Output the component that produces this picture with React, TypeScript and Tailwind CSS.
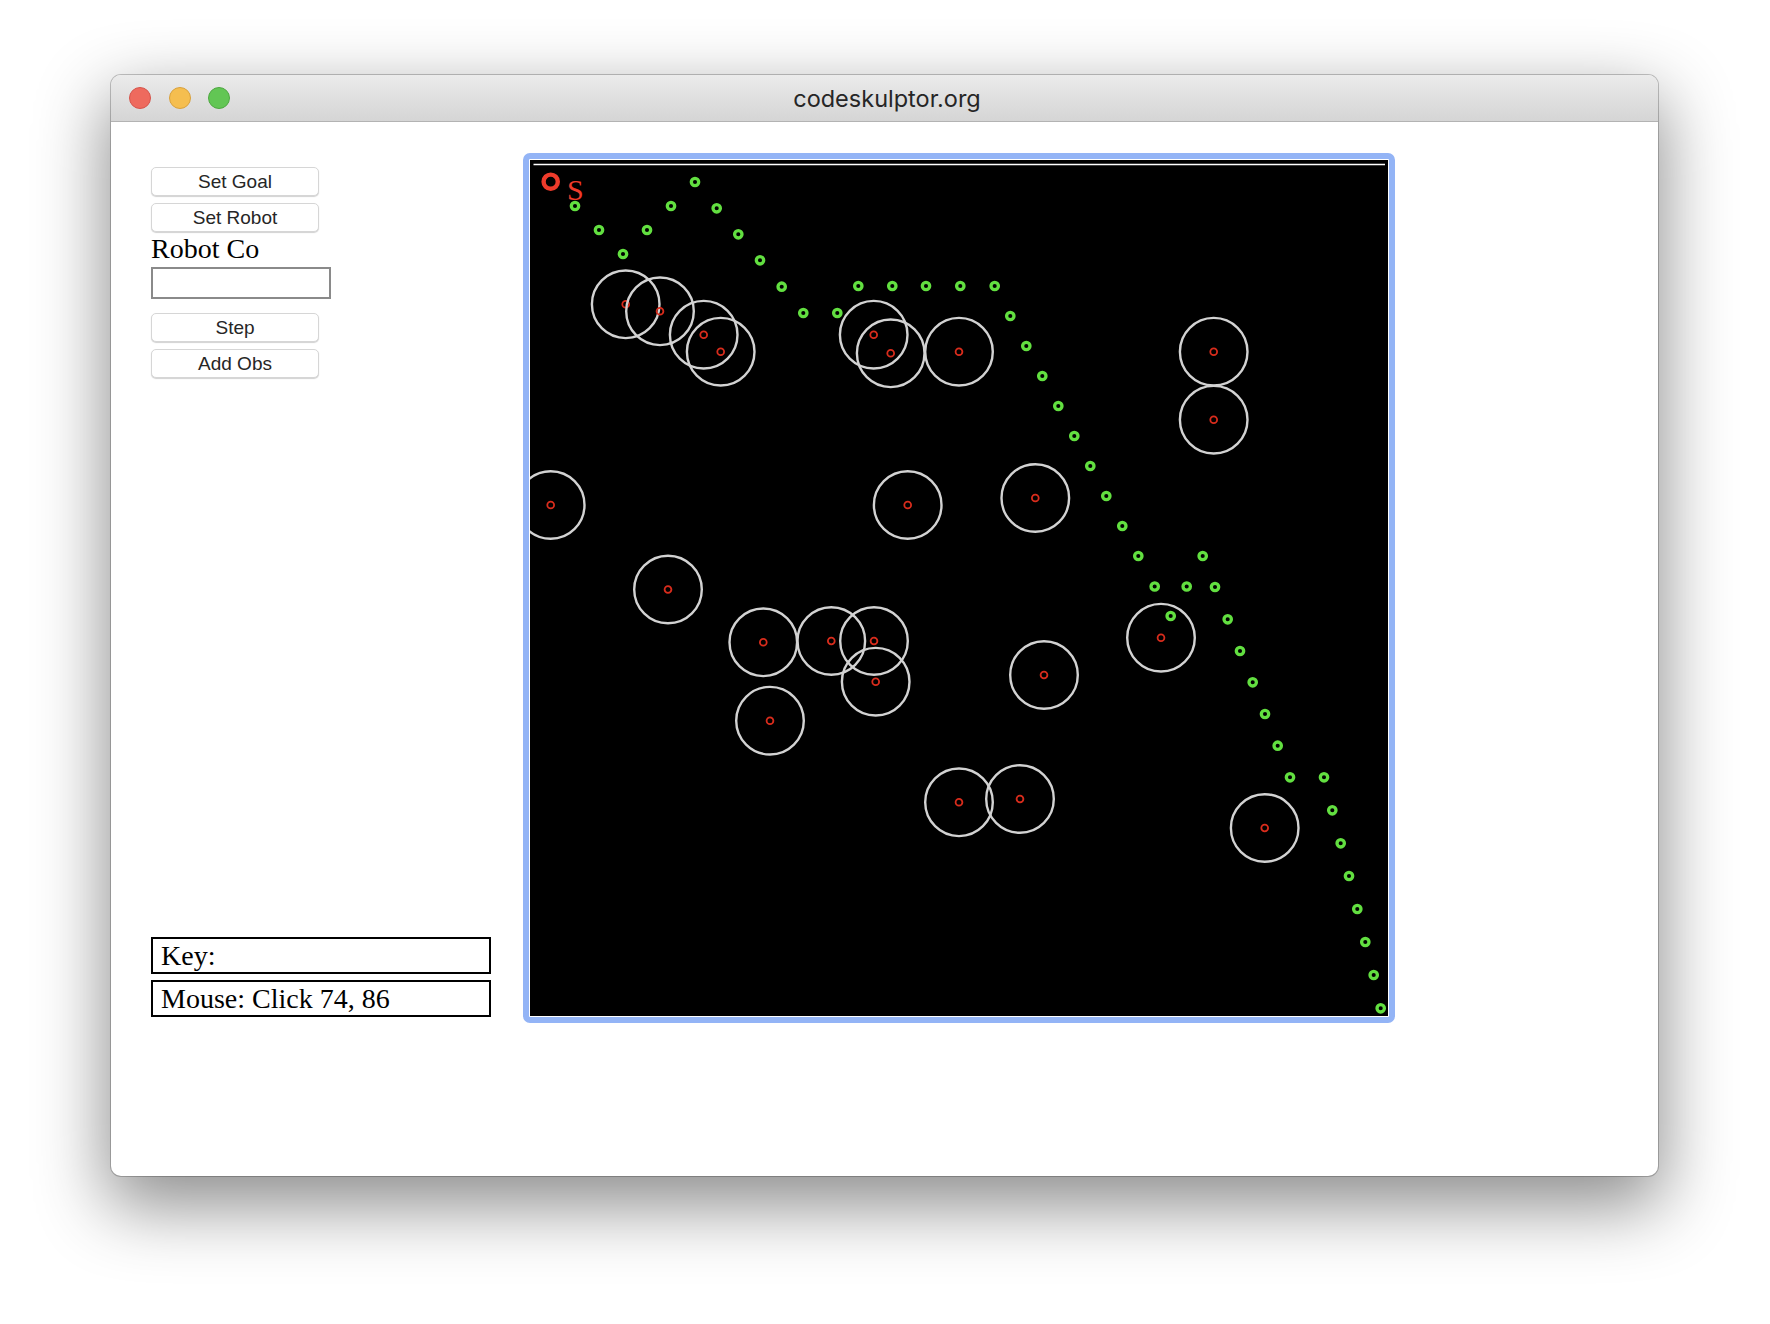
import React from "react";

// canvas drawing is kept in page coordinates (viewBox starts where the canvas starts)
const GOAL = { x: 550.7, y: 181.7 };

const PATH: [number, number][] = [
  [575, 206], [599, 230], [623, 254], [647, 230], [671, 206], [695, 182],
  [716.7, 208.3], [738.3, 234.3], [760, 260.3], [781.7, 286.7], [803.3, 313],
  [837.3, 313], [858.3, 286], [892.3, 286], [926, 286], [960.3, 286],
  [994.7, 286], [1010.3, 316], [1026.3, 346], [1042.3, 376], [1058.3, 406],
  [1074.3, 436], [1090.3, 466], [1106.3, 496], [1122.3, 526], [1138.3, 556],
  [1202.7, 556], [1154.7, 586.5], [1186.7, 586.5], [1215, 587], [1170.7, 616],
  [1227.7, 619.3], [1240, 651], [1252.7, 682.3], [1265, 714], [1277.7, 745.7],
  [1290, 777.3], [1324, 777.3], [1332.3, 810.3], [1340.7, 843.3], [1349, 876],
  [1357.3, 909], [1365.3, 942], [1373.7, 975], [1380.7, 1008.3],
];

const OBSTACLES: [number, number][] = [
  [625.7, 304.3], [660, 311.3], [703.7, 334.7], [720.7, 351.7],
  [873.7, 334.7], [890.7, 353.3], [959, 351.7],
  [1213.7, 351.7], [1213.7, 419.7],
  [550.7, 505], [907.7, 505], [1035.3, 498], [668, 589.5],
  [763.3, 642.3], [831.3, 641], [874, 641], [875.7, 681.7], [770, 720.7],
  [1044, 675], [1161, 637.7], [959, 802.3], [1020, 799], [1264.7, 828],
];

function ControlButton({ title }: { title: string }) {
  return (
    <button className="w-[168px] h-[29px] rounded-[5px] bg-white border border-[#d6d6d6] shadow-[0_1px_1px_rgba(0,0,0,0.18)] text-[19px] leading-none text-[#262626] font-['Liberation_Sans',Arial,sans-serif]">
      {title}
    </button>
  );
}

function InfoBox({ text }: { text: string }) {
  return (
    <div className="w-[340px] h-[37px] border-2 border-black pl-2 text-[28px] leading-[33px] text-black font-['Liberation_Serif','Times_New_Roman',serif]">
      {text}
    </div>
  );
}

function WorldCanvas() {
  return (
    <div className="rounded-[7px] border-[6px] border-[#93b4f6] bg-white p-px">
      <div className="w-[858px] h-[856px] bg-black">
        <svg width={858} height={856} viewBox="530 160 858 856" className="block">
          {/* world boundary */}
          <line x1={533.5} y1={164.5} x2={1385} y2={164.5} stroke="#ffffff" strokeWidth={1.4} />

          {OBSTACLES.map(([x, y], i) => (
            <g key={`o${i}`}>
              <circle cx={x} cy={y} r={33.8} fill="none" stroke="#d2d2d2" strokeWidth={2.4} />
              <circle cx={x} cy={y} r={3.4} fill="none" stroke="#d82c1c" strokeWidth={1.8} />
            </g>
          ))}

          {PATH.map(([x, y], i) => (
            <circle key={`p${i}`} cx={x} cy={y} r={3.7} fill="none" stroke="#62df40" strokeWidth={3.3} />
          ))}

          <circle cx={GOAL.x} cy={GOAL.y} r={7.1} fill="none" stroke="#ee3b2b" strokeWidth={4.4} />
          <text
            x={567}
            y={200}
            fill="#ee3b2b"
            fontSize={30}
            style={{ fontFamily: '"Liberation Serif", "Times New Roman", serif' }}
          >
            S
          </text>
        </svg>
      </div>
    </div>
  );
}

function App() {
  return (
    <div className="w-[1770px] h-[1324px] bg-white overflow-hidden">
      <div className="ml-[111px] pt-[75px]">
        <div className="w-[1547px] h-[1101px] flex flex-col bg-white rounded-[10px] overflow-hidden shadow-[0_0_0_1px_rgba(0,0,0,0.22),0_26px_70px_4px_rgba(0,0,0,0.45)]">
          {/* title bar */}
          <div className="relative h-[47px] shrink-0 flex items-center bg-gradient-to-b from-[#ebebeb] to-[#d5d5d5] border-b border-[#b3b3b3]">
            <div className="flex items-center gap-[17.5px] pl-[18px]">
              <span className="w-[22px] h-[22px] rounded-full bg-[#ee6a5e] border border-[#d6544b]" />
              <span className="w-[22px] h-[22px] rounded-full bg-[#f5be4f] border border-[#d9a13c]" />
              <span className="w-[22px] h-[22px] rounded-full bg-[#62c654] border border-[#4ea841]" />
            </div>
            <div className="absolute inset-0 flex items-center justify-center pt-[2px] text-[23.5px] text-[#262626] font-['Inter','Liberation_Sans',sans-serif] pl-[5px]">
              codeskulptor.org
            </div>
          </div>

          {/* content */}
          <div className="flex flex-1 pl-[40px]">
            <div className="w-[372px] shrink-0 flex flex-col items-start pt-[45px]">
              <ControlButton title="Set Goal" />
              <div className="mt-[7px]">
                <ControlButton title="Set Robot" />
              </div>
              <div className="mt-[1px] h-[32px] leading-[32px] text-[28px] text-black font-['Liberation_Serif','Times_New_Roman',serif]">
                Robot Co
              </div>
              <input
                type="text"
                className="mt-[2px] w-[180px] h-[32px] border-2 border-[#8a8a8a] bg-white outline-none"
              />
              <div className="mt-[14px]">
                <ControlButton title="Step" />
              </div>
              <div className="mt-[7px]">
                <ControlButton title="Add Obs" />
              </div>

              <div className="mt-[559px] flex flex-col gap-[6px]">
                <InfoBox text="Key:" />
                <InfoBox text="Mouse: Click 74, 86" />
              </div>
            </div>

            <div className="pt-[31px]">
              <WorldCanvas />
            </div>
          </div>
        </div>
      </div>
    </div>
  );
}

export default App;
